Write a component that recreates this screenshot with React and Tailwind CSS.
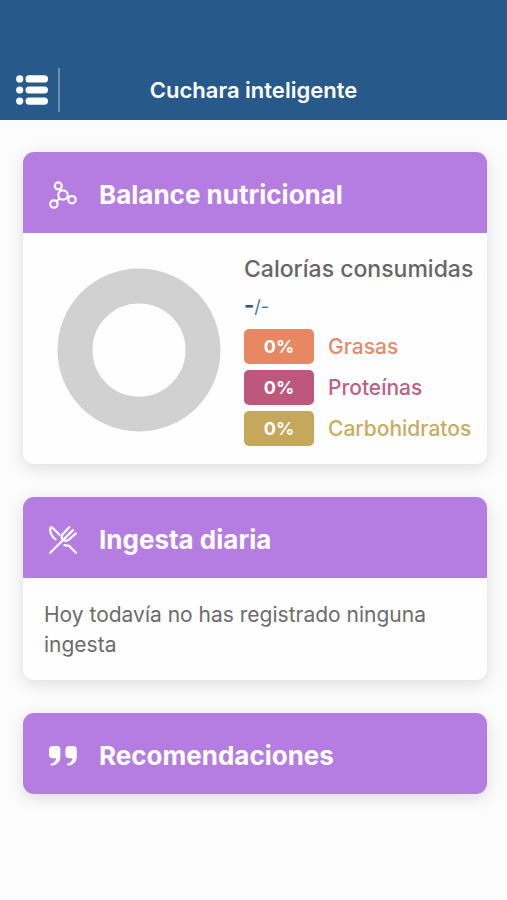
const nutrients = [
    { name: 'Grasas', value: '0%', badge: 'bg-[#e88863]', text: 'text-[#e58a6b]' },
    { name: 'Proteínas', value: '0%', badge: 'bg-[#bd577b]', text: 'text-[#bf5f82]' },
    { name: 'Carbohidratos', value: '0%', badge: 'bg-[#c5a85c]', text: 'text-[#c9ab62]' },
];

const MenuIcon = () => (
    <svg viewBox="0 0 32 30" className="w-8 h-[30px]" fill="currentColor" aria-hidden="true">
        <circle cx="3.7" cy="3.9" r="3.6" />
        <circle cx="3.7" cy="15" r="3.6" />
        <circle cx="3.7" cy="26.1" r="3.6" />
        <rect x="9.5" y="0.3" width="22.5" height="7.2" rx="3.6" />
        <rect x="9.5" y="11.4" width="22.5" height="7.2" rx="3.6" />
        <rect x="9.5" y="22.5" width="22.5" height="7.2" rx="3.6" />
    </svg>
);

const MoleculeIcon = () => (
    <svg viewBox="0 0 28 28" className="w-7 h-7" fill="none" stroke="currentColor" strokeWidth="2.2" aria-hidden="true">
        <circle cx="9.3" cy="4.9" r="3.5" />
        <circle cx="14" cy="14" r="4.7" />
        <circle cx="23" cy="18.7" r="3.7" />
        <circle cx="4.9" cy="23" r="3.7" />
        <path d="M11 8.2l.8 1.5M18.4 16.2l1.2.7M10.5 17.5l-2.8 2.7" />
    </svg>
);

const UtensilsIcon = () => (
    <svg
        viewBox="0 0 28 28"
        className="w-7 h-7"
        fill="none"
        stroke="currentColor"
        strokeWidth="2.2"
        strokeLinecap="round"
        strokeLinejoin="round"
        aria-hidden="true"
    >
        {/* Cuchillo */}
        <path d="M10.4 8.8L4 2.2C3 1.2 1.2 1 1.2 2.8c-.2 4.4 1.6 7.8 5.4 10.6" />
        <path d="M15.4 19.2l4.6.6 7 7" />
        {/* Tenedor */}
        <path d="M1.2 26.8L24 4.1" />
        <path d="M20.4 1.1l-6 6.3c-1.9 1.9-2 4.6-.7 6.3 1.8 1.5 4.9 1.5 6.7-.4l6.5-5.9" />
    </svg>
);

const QuoteIcon = () => (
    <svg viewBox="0 0 28 20" className="w-7 h-5" fill="currentColor" aria-hidden="true">
        <path d="M3.4 0h4.8c1.9 0 3.2 1.3 3.2 3.2v7.2c0 5-3.3 8.6-8.4 9.2-1.5.2-2-1.5-.6-2 2.9-.9 4.5-2.7 4.8-5.3H3.4C1.4 12.3 0 11 0 9.1V3.2C0 1.3 1.4 0 3.4 0z" />
        <path d="M19.8 0h4.8c1.9 0 3.2 1.3 3.2 3.2v7.2c0 5-3.3 8.6-8.4 9.2-1.5.2-2-1.5-.6-2 2.9-.9 4.5-2.7 4.8-5.3h-3.8c-2 0-3.4-1.3-3.4-3.2V3.2c0-1.9 1.4-3.2 3.4-3.2z" />
    </svg>
);

const Card = ({ icon, title, children }) => (
    <section className="bg-[#fefefe] rounded-[11px] overflow-hidden shadow-[0_4px_16px_rgba(0,0,0,0.13)]">
        <div className="bg-[#b57ce2] text-white h-[81px] pl-[26px] pt-1 flex items-center gap-[22px]">
            <span className="w-7 flex justify-center">{icon}</span>
            <h2 className="text-[26px] leading-8 font-bold">{title}</h2>
        </div>
        {children}
    </section>
);

const App = () => {
    return (
        <div className="min-h-screen bg-[#fcfcfc] font-['Inter','Liberation_Sans',sans-serif]">
            {/* --- CABECERA --- */}
            <header className="bg-[#275a8b] text-white pt-15 h-30 grid grid-cols-[60px_1fr_60px] items-center">
                <button type="button" aria-label="Menú" className="pl-4 h-11 flex items-center border-r-2 border-[#6a8fb3]">
                    <MenuIcon />
                </button>
                <h1 className="text-[22px] leading-7 font-semibold text-center">Cuchara inteligente</h1>
            </header>

            <main className="pl-[23px] pr-5 py-8 flex flex-col gap-[33px]">
                {/* --- BALANCE --- */}
                <Card icon={<MoleculeIcon />} title="Balance nutricional">
                    <div className="flex items-center gap-[23px] pl-[34px] pt-5 pb-[18px]">
                        <svg viewBox="0 0 164 164" className="w-[164px] h-[164px] shrink-0" role="img" aria-label="Sin datos">
                            <circle cx="82" cy="82" r="64" fill="none" stroke="#d1d1d1" strokeWidth="35" />
                        </svg>
                        <div className="whitespace-nowrap">
                            <h3 className="text-[23px] leading-8 font-medium text-[#666]">Calorías consumidas</h3>
                            <p className="h-10 text-lg leading-10 text-[#3f78ab]">
                                <span className="text-[22px] font-bold text-[#275a8b]">-</span>/-
                            </p>
                            <ul className="flex flex-col gap-1.5 pt-1">
                                {nutrients.map((n) => (
                                    <li key={n.name} className="flex items-center gap-3.5">
                                        <span className={`w-[70px] h-[35px] rounded-[5px] flex items-center justify-center text-lg font-bold text-white ${n.badge}`}>
                                            {n.value}
                                        </span>
                                        <span className={`text-[21px] leading-7 font-medium ${n.text}`}>{n.name}</span>
                                    </li>
                                ))}
                            </ul>
                        </div>
                    </div>
                </Card>

                {/* --- INGESTA --- */}
                <Card icon={<UtensilsIcon />} title="Ingesta diaria">
                    <p className="px-[21px] pt-[22px] pb-5 text-[21px] leading-[30px] text-[#6b6b6b]">
                        Hoy todavía no has registrado ninguna ingesta
                    </p>
                </Card>

                {/* --- RECOMENDACIONES --- */}
                <Card icon={<QuoteIcon />} title="Recomendaciones" />
            </main>
        </div>
    );
};

export default App;
